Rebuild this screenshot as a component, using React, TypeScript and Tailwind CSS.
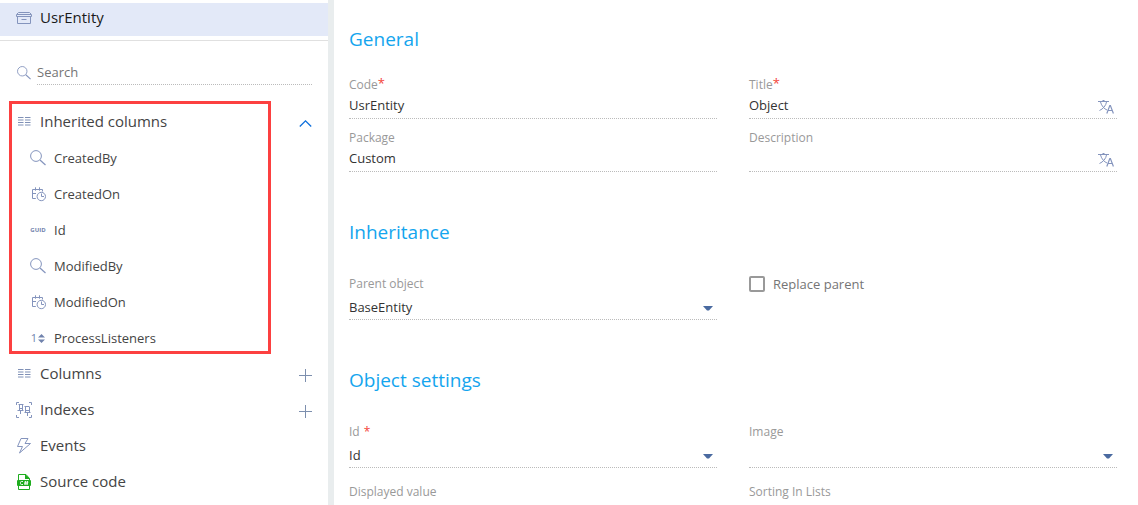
import React, { useId } from 'react';

type IconProps = { className?: string };

const BoxIcon = () => (
  <svg width="16" height="16" viewBox="0 0 16 16" fill="none" stroke="#8494bd">
    <path d="M2.500 2.500h11L15.500 4.500v2H.5v-2z" strokeLinejoin="round" />
    <path d="M1 4.500h14M1.500 6.500v7h13v-7M5.500 9.500h5" />
  </svg>
);

const SearchIcon = ({ className }: IconProps) => (
  <svg className={className} width="16" height="16" viewBox="0 0 16 16" fill="none" stroke="#8494bd">
    <circle cx="6" cy="6" r="5.400" />
    <path d="M10 10l5.500 5" strokeWidth="1.200" />
  </svg>
);

const ColumnsIcon = () => (
  <svg width="16" height="16" viewBox="0 0 16 16" fill="none" stroke="#7f90b6">
    <path d="M2 3.500h5.500M2 6h5.500M2 8.500h5.500M2 11h5.500M9 3.500h5.500M9 6h5.500M9 8.500h5.500M9 11h5.500" />
  </svg>
);

const DateTimeIcon = () => (
  <svg width="16" height="16" viewBox="0 0 16 16" fill="none" stroke="#8494bd">
    <path d="M5.800 12.500H2.500v-9h10v2M5.500 1.300v3.400M9.500 1.300v3.400M2.500 7.500h3.500" />
    <circle cx="11.300" cy="10.500" r="4.200" />
    <path d="M11.500 7.500v3h2.500" />
  </svg>
);

const GuidIcon = () => (
  <span className="text-[6px] leading-4 font-bold text-[#7183ad]">GUID</span>
);

const NumberIcon = () => (
  <span className="flex items-center gap-px text-[11px] leading-4 text-[#7183ad]">
    1
    <svg width="7" height="9" viewBox="0 0 7 9" fill="#7183ad">
      <path d="M3.500 0L7 3.600H0zM3.500 9L0 5.400h7z" />
    </svg>
  </span>
);

const IndexesIcon = () => (
  <svg width="16" height="16" viewBox="0 0 16 16" fill="none" stroke="#8494bd">
    <path d="M.5 3V.5H3M13 .5h2.500V3M.5 13v2.500H3M13 15.500h2.500V13" />
    <path d="M3.500 3v5.500M6.500 3v5.500M2.500 2.500h5M1.500 8.500h6M4.500 9v3M3.500 6.500h3" />
    <path d="M9.500 5v5.500M13.500 5v5.500M8.500 4.500h5M8.500 10.500h6M11.500 11v3M9.500 8.500h4" />
  </svg>
);

const EventsIcon = () => (
  <svg width="16" height="16" viewBox="0 0 16 16" fill="none" stroke="#8494bd" strokeLinejoin="round">
    <path d="M5 .5h7L9 5.500h5.500L3.500 15l3-6.500h-5z" />
  </svg>
);

const CodeIcon = () => (
  <svg width="16" height="16" viewBox="0 0 16 16">
    <path d="M2.500.500h7.500l3.500 4v11h-11z" fill="#fff" stroke="#1fad1f" />
    <path d="M9 0l5 5H9z" fill="#1fad1f" />
    <rect x="1" y="6" width="14" height="6" rx="1" fill="#1fad1f" />
    <path d="M7 7.500H5.500a1 1 0 0 0-1 1v1a1 1 0 0 0 1 1H7M9.500 7l-.5 4M11.500 7l-.5 4M8.300 8.200h4M8 9.800h4" fill="none" stroke="#fff" strokeWidth=".9" />
  </svg>
);

const TranslateIcon = () => (
  <svg width="16" height="16" viewBox="0 0 16 16" fill="none" stroke="#8494bd">
    <path d="M0 2.500h11M4.500 1.500h2M2.500 3c1 4 4 7 6.500 8M8.500 3c-.5 3.500-3.500 7-7 8.500" />
    <path d="M8.800 14.500l3-8h.6l3 8M9.800 11.500h4.600" strokeWidth="1.200" />
  </svg>
);

const PlusIcon = () => (
  <svg width="13" height="13" viewBox="0 0 13 13" stroke="#7d8fae">
    <path d="M6.500 0v13M0 6.500h13" />
  </svg>
);

const ChevronUp = () => (
  <svg width="13" height="13" viewBox="0 0 13 13" fill="none" stroke="#0d6fdc" strokeWidth="1.300">
    <path d="M.8 9.500l5.700-5.700 5.700 5.700" />
  </svg>
);

const columns = [
  { name: 'CreatedBy', icon: <SearchIcon /> },
  { name: 'CreatedOn', icon: <DateTimeIcon /> },
  { name: 'Id', icon: <GuidIcon /> },
  { name: 'ModifiedBy', icon: <SearchIcon /> },
  { name: 'ModifiedOn', icon: <DateTimeIcon /> },
  { name: 'ProcessListeners', icon: <NumberIcon /> },
];

function GroupRow({ icon, label, action, actionLabel }: {
  icon: React.ReactNode;
  label: string;
  action?: React.ReactNode;
  actionLabel?: string;
}) {
  return (
    <div className="flex h-9 items-center pr-4 pl-4">
      <button type="button" className="flex flex-1 items-center gap-2 text-left text-[15px] leading-5 text-[#444]">
        <span className="flex w-4 justify-center">{icon}</span>
        <span className="pb-0.5">{label}</span>
      </button>
      {action && (
        <button type="button" aria-label={actionLabel} className="pt-[3px]">{action}</button>
      )}
    </div>
  );
}

function Sidebar() {
  return (
    <aside className="w-[334px] shrink-0 border-r-[6px] border-[#e9edee] pt-[3px]">
      <button type="button" className="flex h-[33px] w-full items-center gap-2 bg-[#e3e9f8] px-4 pb-1 text-left text-[15px] leading-5 text-[#1a1a1a]">
        <BoxIcon />
        <span className="pb-0.5">UsrEntity</span>
      </button>
      <div className="mt-1 h-px bg-[#e0e0e0]" />
      <div className="mt-5 flex h-6 items-center gap-[5px] px-4">
        <SearchIcon className="h-[14px] w-4" />
        <input
          type="text"
          aria-label="Search"
          placeholder="Search"
          className="h-6 min-w-0 flex-1 border-b border-dotted border-[#bbb] pb-0.5 text-[13px] text-[#444] outline-none placeholder:text-[#757575]"
        />
      </div>
      <nav className="mt-[19px]">
        <div className="relative">
          <GroupRow icon={<ColumnsIcon />} label="Inherited columns" action={<ChevronUp />} actionLabel="Collapse" />
          {columns.map((c) => (
            <button key={c.name} type="button" className="flex h-9 w-full items-center gap-2 pl-[30px] text-left text-[13px] text-[#444]">
              <span className="flex w-4 shrink-0 justify-center">{c.icon}</span>
              <span className="pt-0.5">{c.name}</span>
            </button>
          ))}
          <div className="pointer-events-none absolute -top-[3px] bottom-[2px] left-[9px] w-[262px] border-3 border-[#fc4040]" />
        </div>
        <GroupRow icon={<ColumnsIcon />} label="Columns" action={<PlusIcon />} actionLabel="Add column" />
        <GroupRow icon={<IndexesIcon />} label="Indexes" action={<PlusIcon />} actionLabel="Add index" />
        <GroupRow icon={<EventsIcon />} label="Events" />
        <GroupRow icon={<CodeIcon />} label="Source code" />
      </nav>
    </aside>
  );
}

function TextField({ label, value = '', required, translate }: {
  label: string;
  value?: string;
  required?: boolean;
  translate?: boolean;
}) {
  const id = useId();
  return (
    <div className="pt-[9px]">
      <label htmlFor={id} className="flex h-5 text-[12px] leading-5 text-[#999]">
        {label}
        {required && <span className="text-[13px] leading-4 text-[#f4433a]">*</span>}
      </label>
      <div className="flex h-6 items-center border-b border-dotted border-[#bbb] pr-[3px]">
        <input id={id} type="text" defaultValue={value} className="h-[23px] min-w-0 flex-1 pb-[3px] text-[13px] text-[#333] outline-none" />
        {translate && (
          <button type="button" aria-label={`Translate ${label}`}><TranslateIcon /></button>
        )}
      </div>
    </div>
  );
}

function SelectField({ label, value = '', required }: { label: string; value?: string; required?: boolean }) {
  const id = useId();
  return (
    <div>
      <label htmlFor={id} className="flex h-5 gap-1 text-[12px] leading-5 text-[#999]">
        {label}
        {required && <span className="text-[#f4433a]">*</span>}
      </label>
      <div className="relative h-[26px] border-b border-dotted border-[#bbb]">
        <select id={id} defaultValue={value} className="h-[25px] w-full appearance-none pb-0.5 text-[13px] text-[#333] outline-none">
          <option value={value}>{value}</option>
        </select>
        <svg className="pointer-events-none absolute top-3 right-1" width="10" height="5" viewBox="0 0 10 5" fill="#4a6aa0">
          <path d="M0 0h10L6 4.500H4z" />
        </svg>
      </div>
    </div>
  );
}

const Heading = ({ children }: { children: React.ReactNode }) => (
  <h2 className="h-7 text-[19px] leading-7 text-[#14a5ee]">{children}</h2>
);

export default function App() {
  return (
    <div className="flex h-screen overflow-hidden bg-white font-['Open_Sans','Noto_Sans',sans-serif]">
      <Sidebar />
      <main className="flex min-w-0 flex-1 flex-col gap-[46px] pt-[25px] pr-[21px] pl-[15px]">
        <section>
          <Heading>General</Heading>
          <div className="mt-[13px] grid grid-cols-2 gap-x-8">
            <TextField label="Code" value="UsrEntity" required />
            <TextField label="Title" value="Object" required translate />
            <TextField label="Package" value="Custom" />
            <TextField label="Description" translate />
          </div>
        </section>
        <section>
          <Heading>Inheritance</Heading>
          <div className="mt-7 grid grid-cols-2 gap-x-8">
            <SelectField label="Parent object" value="BaseEntity" />
            <label className="flex h-5 items-center gap-2 text-[13px] text-[#757575]">
              <input type="checkbox" className="size-4 appearance-none rounded-xs border-2 border-[#999] checked:bg-[#4a6aa0]" />
              <span className="pt-0.5">Replace parent</span>
            </label>
          </div>
        </section>
        <section>
          <Heading>Object settings</Heading>
          <div className="mt-7 grid grid-cols-2 gap-x-8 gap-y-[14px]">
            <SelectField label="Id" value="Id" required />
            <SelectField label="Image" />
            <SelectField label="Displayed value" />
            <SelectField label="Sorting In Lists" />
          </div>
        </section>
      </main>
    </div>
  );
}
